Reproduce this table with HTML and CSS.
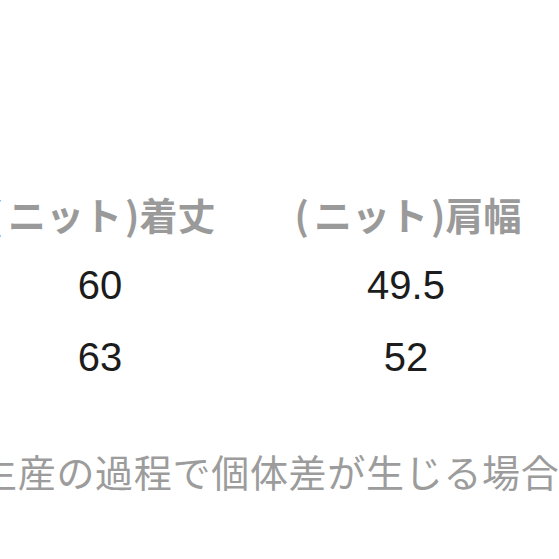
FILE: index.html
```html
<!DOCTYPE html>
<html lang="ja">
<head>
<meta charset="utf-8">
<link rel="stylesheet" href="styles.css">
</head>
<body>
<main class="page">
  <div class="sizes">
    <div class="cell head"><span class="po">(</span>ニット<span class="pc">)</span>着丈</div>
    <div class="cell head"><span class="po">(</span>ニット<span class="pc">)</span>肩幅</div>
    <div class="cell num">60</div>
    <div class="cell num">49.5</div>
    <div class="cell num">63</div>
    <div class="cell num">52</div>
  </div>
  <p class="note">生産の過程で個体差が生じる場合</p>
</main>
</body>
</html>
```
FILE: styles.css
```css
html, body {
  margin: 0;
  padding: 0;
  background: #ffffff;
}
body {
  width: 559px;
  height: 559px;
  overflow: hidden;
}
.page {
  padding-top: 177px;
}
.sizes {
  display: grid;
  grid-template-columns: 306px 306px;
  grid-auto-rows: 72px;
  margin-left: -53px;
}
.cell {
  display: flex;
  align-items: center;
  justify-content: center;
  white-space: nowrap;
}
.head {
  padding-left: 4px;
  font-family: "Noto Sans CJK JP", sans-serif;
  font-weight: 700;
  font-size: 38px;
  color: #9a9a9a;
}
.po {
  margin-right: 5px;
}
.pc {
  margin-left: 3px;
}
.num {
  font-family: "Liberation Sans", Arial, sans-serif;
  font-size: 40px;
  color: #1c1c1c;
}
.note {
  margin: 59px 0 0 -21px;
  font-family: "Noto Sans CJK JP", sans-serif;
  font-weight: 400;
  font-size: 38px;
  line-height: 38px;
  letter-spacing: 0.7px;
  color: #9c9c9c;
  white-space: nowrap;
}
```
